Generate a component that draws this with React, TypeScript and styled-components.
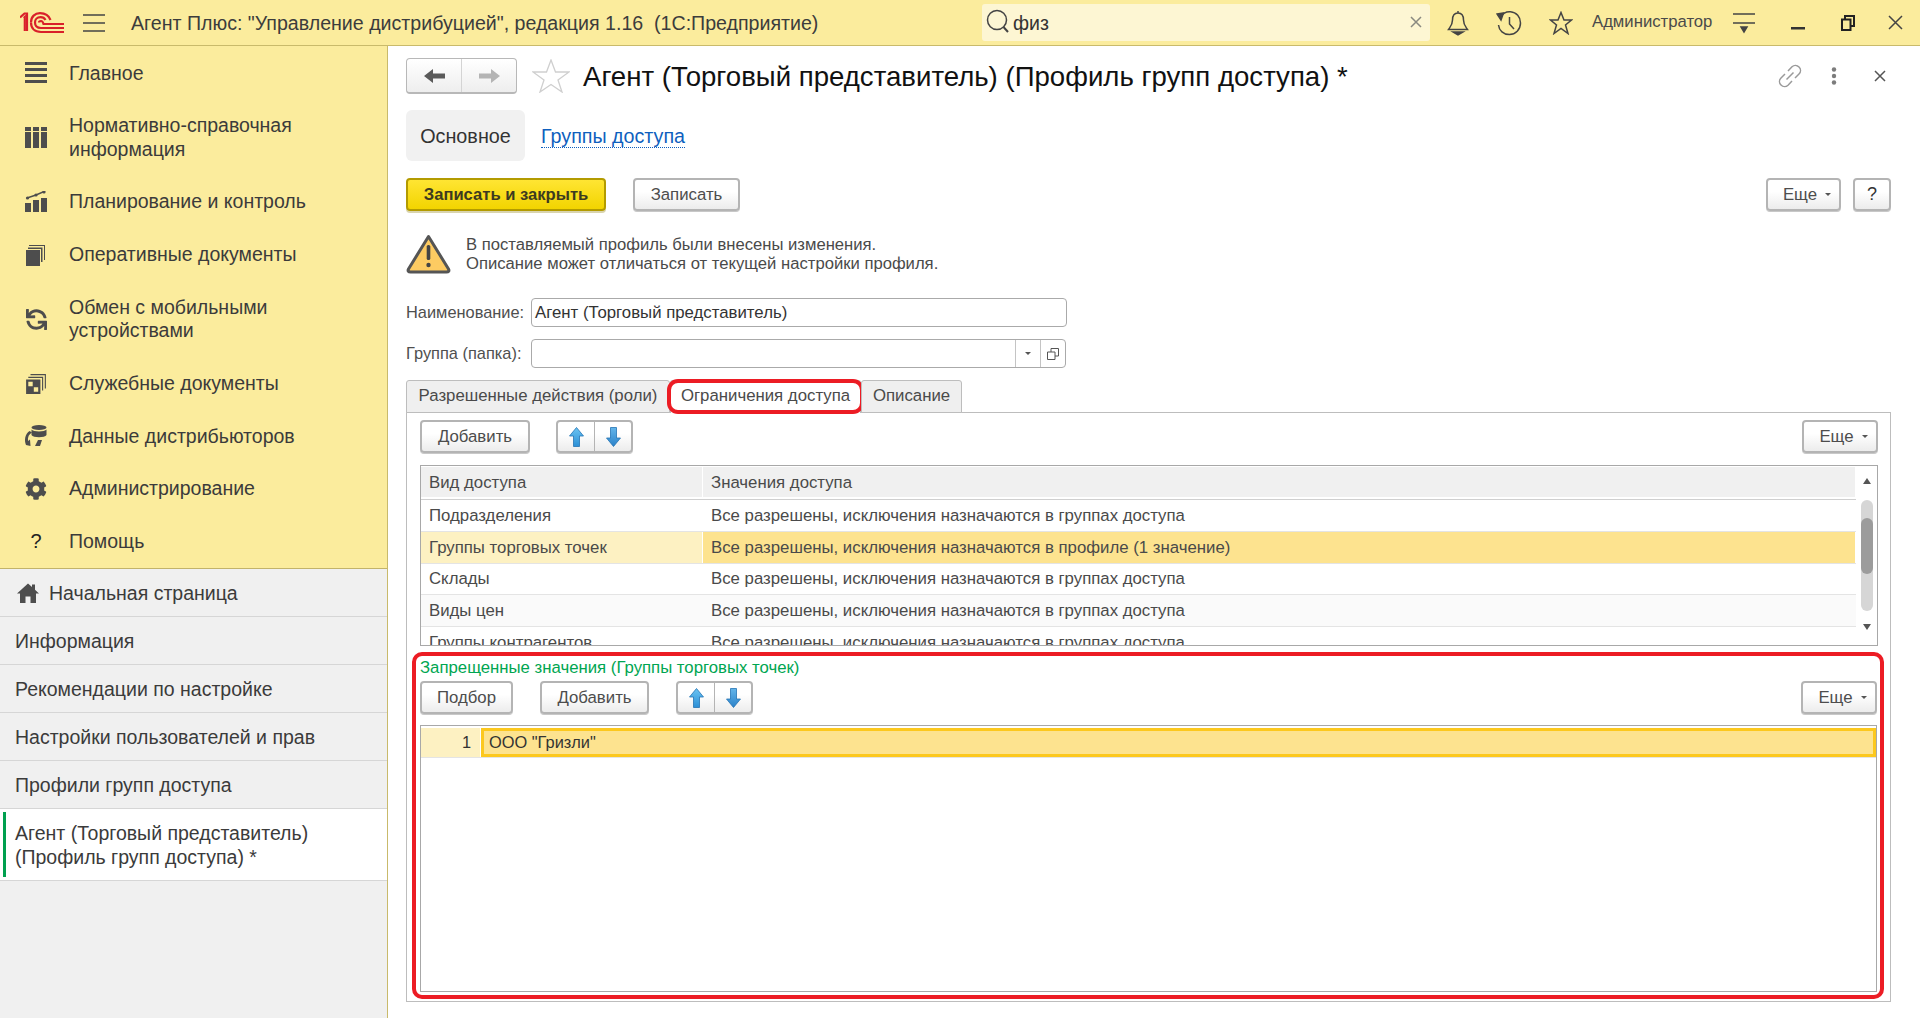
import React from 'react';
import styled, { createGlobalStyle } from 'styled-components';
import { FaCog, FaSync } from 'react-icons/fa';

const GlobalStyle = createGlobalStyle`
  html, body, #root {
    margin: 0;
    padding: 0;
    height: 100%;
  }
  body {
    font-family: "Liberation Sans", Arial, sans-serif;
    color: #333;
    background: #fff;
    overflow: hidden;
  }
  * {
    box-sizing: border-box;
  }
`;

const Page = styled.div`
  width: 1920px;
  height: 1018px;
  display: flex;
  flex-direction: column;
`;

/* top bar */
const TopBar = styled.header`
  height: 46px;
  flex: none;
  display: flex;
  align-items: center;
  background: #fbec9d;
  border-bottom: 1px solid #c9ba6b;
  padding-left: 20px;
`;

const AppTitle = styled.div`
  font-size: 19.6px;
  color: #3c3c3c;
  margin-left: 26px;
  padding-top: 2px;
  width: 851px;
  white-space: nowrap;
`;

const Search = styled.div`
  width: 448px;
  height: 37px;
  margin-top: -1px;
  background: #fdf6d3;
  border-radius: 3px;
  display: flex;
  align-items: center;
  padding: 0 8px 0 4px;
  font-size: 19.5px;
  color: #333;
`;

const SearchText = styled.span`
  flex: 1;
  margin-left: 3px;
  padding-top: 2px;
`;

const TopIcons = styled.div`
  display: flex;
  align-items: center;
  margin-left: 17px;
  gap: 27px;
`;

const UserName = styled.span`
  font-size: 16.7px;
  color: #4a4a4a;
  margin-left: 19px;
  margin-top: -1px;
  width: 141px;
  white-space: nowrap;
`;

const WindowButtons = styled.div`
  display: flex;
  align-items: center;
  gap: 36px;
  margin-left: 36px;
`;

const Body = styled.div`
  flex: 1;
  display: flex;
  min-height: 0;
`;

/* left side */
const Side = styled.aside`
  width: 388px;
  flex: none;
  display: flex;
  flex-direction: column;
  background: #f0f0f0;
  border-right: 1px solid #c9ba6b;
`;

const Sections = styled.nav`
  flex: none;
  height: 523px;
  background: #fbec9d;
  border-bottom: 1px solid #c2b36a;
  padding-top: 1px;
`;

const SectionItem = styled.div`
  display: flex;
  align-items: center;
  padding: 14.6px 20px 14.6px 25px;
  font-size: 19.5px;
  line-height: 23.5px;
  color: #3b3b3b;
`;

const SectionIcon = styled.span`
  width: 22px;
  height: 22px;
  flex: none;
  margin-right: 22px;
  display: flex;
  align-items: center;
  justify-content: center;
  color: #4d4d4d;
  font-size: 20px;
`;

const HelpMark = styled.span`
  color: #222;
  font-size: 20px;
`;

const SyncMark = styled(FaSync)`
  transform: scaleX(-1);
`;

const OpenList = styled.div`
  display: flex;
  flex-direction: column;
`;

const OpenItem = styled.div<{ $active?: boolean }>`
  position: relative;
  display: flex;
  align-items: center;
  padding: 12px 15px 11px;
  min-height: 48px;
  font-size: 19.5px;
  line-height: 24px;
  color: #3b3b3b;
  background: ${(p) => (p.$active ? '#fff' : 'transparent')};
  border-bottom: 1px solid #d6d6d6;

  ${(p) =>
    p.$active &&
    `&::before {
      content: '';
      position: absolute;
      left: 3px;
      top: 3px;
      bottom: 3px;
      width: 3px;
      background: #00a04f;
    }`}
`;

const HomeMark = styled.svg`
  display: block;
  flex: none;
  fill: #4d4d4d;
  margin-right: 10px;
  margin-left: 2px;
`;

/* form */
const Main = styled.main`
  flex: 1;
  min-width: 0;
  display: flex;
  flex-direction: column;
  padding: 12px 29px 16px 18px;
  background: #fff;
`;

const TitleRow = styled.div`
  height: 36px;
  display: flex;
  align-items: center;
`;

const NavButtons = styled.div`
  width: 111px;
  height: 36px;
  display: flex;
  border: 1px solid #b8b8b8;
  border-bottom-width: 2px;
  border-radius: 4px;
  background: linear-gradient(#fff, #eeeeee);
`;

const NavCell = styled.span`
  flex: 1;
  display: flex;
  align-items: center;
  justify-content: center;

  & + & {
    border-left: 1px solid #d4d4d4;
  }
`;

const FormTitle = styled.h1`
  margin: 0 0 0 13px;
  padding-top: 2px;
  font-size: 27.6px;
  font-weight: 400;
  color: #111;
  white-space: nowrap;
  flex: 1;
`;

const FormIcons = styled.div`
  display: flex;
  align-items: center;
  gap: 29px;
  margin-right: 5px;
`;

const PageTabs = styled.div`
  margin-top: 16px;
  height: 51px;
  display: flex;
  align-items: center;
  gap: 16px;
`;

const CurrentPage = styled.div`
  width: 119px;
  height: 51px;
  padding-top: 2px;
  display: flex;
  align-items: center;
  justify-content: center;
  background: #f1f1f1;
  border-radius: 6px;
  font-size: 19.8px;
  color: #333;
`;

const PageLink = styled.a`
  font-size: 19.7px;
  margin-top: 2px;
  color: #0f5fbe;
  text-decoration: none;
  border-bottom: 1px dotted #0f5fbe;
  line-height: 21px;
`;

const CommandBar = styled.div<{ $gap?: number }>`
  display: flex;
  align-items: flex-start;
  gap: ${(p) => p.$gap ?? 27}px;
`;

const TopCommands = styled(CommandBar)`
  margin-top: 17px;
`;

const Spacer = styled.div`
  flex: 1;
`;

const Button = styled.button<{ $w: number }>`
  width: ${(p) => p.$w}px;
  height: 33px;
  padding: 0;
  display: flex;
  align-items: center;
  justify-content: center;
  gap: 8px;
  font-family: inherit;
  font-size: 16.8px;
  color: #4d4d4d;
  border: 2px solid #b4b4b4;
  border-radius: 4px;
  background: linear-gradient(#fff 40%, #ececec);
  box-shadow: 0 1px 0 #c8c8c8;
`;

const DefaultButton = styled(Button)`
  font-weight: 700;
  font-size: 16.6px;
  color: #3d3a20;
  border-color: #b39b00;
  background: linear-gradient(#ffe533, #f2d400);
  box-shadow: 0 2px 0 #d9d4ae;
`;

const MoreBtn = styled(Button)`
  padding-left: 7px;
`;

const HelpBtn = styled(Button)`
  font-size: 18px;
  color: #333;
`;

const Caret = styled.i`
  display: block;
  width: 0;
  height: 0;
  border-left: 3px solid transparent;
  border-right: 3px solid transparent;
  border-top: 3px solid #555;
`;

const MoveButtons = styled.div`
  width: 77px;
  height: 33px;
  display: flex;
  border: 2px solid #b4b4b4;
  border-radius: 4px;
  background: linear-gradient(#fff 40%, #ececec);
  box-shadow: 0 1px 0 #c8c8c8;
`;

const MoveCell = styled.span`
  flex: 1;
  display: flex;
  align-items: center;
  justify-content: center;

  & + & {
    border-left: 1px solid #b4b4b4;
  }
`;

const Notice = styled.div`
  margin-top: 23px;
  height: 40px;
  display: flex;
  align-items: center;
  gap: 15px;
`;

const NoticeText = styled.div`
  font-size: 16.65px;
  line-height: 19px;
  color: #4a4a4a;
  margin-top: -1px;
`;

const FieldRow = styled.div`
  display: flex;
  align-items: center;
  height: 29px;
  margin-top: 12px;
`;

const NameRow = styled(FieldRow)`
  margin-top: 24px;
`;

const FieldLabel = styled.label`
  width: 125px;
  flex: none;
  font-size: 16.4px;
  color: #4f4f4f;
  white-space: nowrap;
`;

const TextBox = styled.div<{ $w: number }>`
  width: ${(p) => p.$w}px;
  height: 29px;
  display: flex;
  align-items: center;
  padding-left: 3px;
  font-size: 16.8px;
  color: #333;
  border: 1px solid #aaa;
  border-radius: 4px;
`;

const PickerButton = styled.span`
  width: 25px;
  align-self: stretch;
  flex: none;
  display: flex;
  align-items: center;
  justify-content: center;
  border-left: 1px solid #c4c4c4;
`;

const TabStrip = styled.div`
  display: flex;
  height: 33px;
  margin-top: 12px;
  flex: none;
`;

const FormTab = styled.div<{ $w: number; $active?: boolean }>`
  position: relative;
  width: ${(p) => p.$w}px;
  height: 33px;
  padding-bottom: 2px;
  display: flex;
  align-items: center;
  justify-content: center;
  font-size: 16.8px;
  color: #4a4a4a;
  white-space: nowrap;
  background: ${(p) => (p.$active ? '#fff' : '#efefef')};
  border: 1px solid #bdbdbd;
  border-bottom: ${(p) => (p.$active ? 'none' : '1px solid #bdbdbd')};
  border-radius: 3px 3px 0 0;
  z-index: 1;

  ${(p) =>
    p.$active &&
    `&::after {
      content: '';
      position: absolute;
      left: -4px;
      right: -4px;
      top: -2px;
      bottom: -1px;
      border: 4px solid #ec1c24;
      border-radius: 11px;
    }`}
`;

const TabBody = styled.section`
  flex: 1;
  min-height: 0;
  margin-top: -1px;
  display: flex;
  flex-direction: column;
  border: 1px solid #bdbdbd;
  padding-top: 7px;
`;

const UpperPart = styled.div`
  padding: 0 12px 0 13px;
`;

const TableFrame = styled.div`
  margin-top: 12px;
  height: 181px;
  display: flex;
  border: 1px solid #a8a8a8;
  overflow: hidden;
`;

const Rows = styled.div`
  flex: 1;
  min-width: 0;
  display: flex;
  flex-direction: column;
`;

const Row = styled.div<{ $odd?: boolean }>`
  height: 31.8px;
  flex: none;
  display: grid;
  grid-template-columns: 282px 1fr;
  font-size: 16.8px;
  color: #4a4a4a;
  border-bottom: 1px solid #e4e4e4;
  background: ${(p) => (p.$odd ? '#fafafa' : '#fff')};
`;

const Cell = styled.div<{ $fill?: string }>`
  display: flex;
  align-items: center;
  padding: 1px 0 0 8px;
  white-space: nowrap;
  margin-right: 1px;
  background: ${(p) => p.$fill ?? 'transparent'};
`;

const HeadRow = styled(Row)`
  height: 34px;
  padding-top: 1px;
  border-bottom: 1px solid #cfcfcf;
`;

const HeadCell = styled(Cell)`
  background: #f0f0f0;
  margin-bottom: 2px;
`;

const Scroller = styled.div`
  width: 21px;
  flex: none;
  display: flex;
  flex-direction: column;
  align-items: center;
  padding-top: 12px;
`;

const ScrollTrack = styled.div`
  width: 12px;
  height: 111px;
  flex: none;
  margin: 16px 0 13px;
  padding-top: 18px;
  border-radius: 6px;
  background: #d6d6d6;
`;

const ScrollThumb = styled.div`
  height: 56px;
  border-radius: 6px;
  background: #9c9c9c;
`;

const ScrollArrow = styled.i<{ $up?: boolean }>`
  display: block;
  flex: none;
  width: 0;
  height: 0;
  border-left: 4px solid transparent;
  border-right: 4px solid transparent;
  ${(p) => (p.$up ? 'border-bottom: 6px solid #555;' : 'border-top: 6px solid #555;')}
`;

const MarkedPart = styled.div`
  flex: 1;
  min-height: 0;
  margin: 6px 6px 2px 5px;
  padding: 2px 3px 3px 4px;
  display: flex;
  flex-direction: column;
  border: 4px solid #ec1c24;
  border-radius: 10px;
`;

const PartTitle = styled.div`
  font-size: 16.75px;
  line-height: 20px;
  color: #00a651;
  margin-bottom: 3px;
`;

const ValueTable = styled.div`
  flex: 1;
  min-height: 0;
  margin-top: 11px;
  border: 1px solid #a8a8a8;
  padding-top: 2px;
`;

const ValueRow = styled.div`
  height: 30px;
  display: flex;
  font-size: 16.4px;
  color: #333;
  border-bottom: 1px solid #e4e4e4;
`;

const RowNumber = styled.div`
  width: 59px;
  flex: none;
  display: flex;
  align-items: center;
  justify-content: flex-end;
  padding-right: 9px;
  background: #fdf1c2;
  margin-right: 1px;
`;

const ValueCell = styled.div`
  flex: 1;
  display: flex;
  align-items: center;
  padding-left: 5px;
  background: #fde38f;
  border: 3px solid #fcc81e;
`;

const Stroke = styled.svg`
  display: block;
  flex: none;
  fill: none;
  stroke: #444;
  stroke-width: 1.5;
`;

const Solid = styled.svg`
  display: block;
  flex: none;
  fill: currentColor;
`;

function Logo() {
  return (
    <svg width="44" height="22" viewBox="0 0 44 22" style={{ flex: 'none' }}>
      <g fill="none" stroke="#d9202a" strokeWidth="2.2">
        <path d="M0 5.5 L4.5 1.5 H7 V19" />
        <path d="M3.8 6 L4.8 5 V19" />
        <path d="M11 10.5 C11 4.5 15 1.2 20 1.2 C25 1.2 29 4 30.5 8" />
        <path d="M25.5 8 C24.5 6 22.5 5.2 20.5 5.2 C17 5.2 15 7.5 15 10.5 C15 14 17.5 16 21 16 H44" />
        <path d="M11 10.5 C11 16.5 15 20 21 20 H44" />
        <path d="M19 10.5 C19 9.5 20 9 21 9 C22.5 9 23 10 23.5 12 H44" />
      </g>
    </svg>
  );
}

function Burger() {
  return (
    <Stroke width="22" height="18" viewBox="0 0 22 18" style={{ marginLeft: 19 }}>
      <path d="M0 1h22M0 9h22M0 17h22" />
    </Stroke>
  );
}

const sectionIcons: Record<string, React.ReactNode> = {
  main: (
    <Solid width="22" height="22" viewBox="0 0 22 22">
      <rect y="0" width="22" height="3" />
      <rect y="6" width="22" height="3" />
      <rect y="12" width="22" height="3" />
      <rect y="18" width="22" height="3" />
    </Solid>
  ),
  refs: (
    <Solid width="22" height="22" viewBox="0 0 22 22">
      <rect x="0" y="0" width="6" height="4" />
      <rect x="8" y="0" width="6" height="4" />
      <rect x="16" y="0" width="6" height="4" />
      <rect x="0" y="5" width="6" height="16" />
      <rect x="8" y="5" width="6" height="16" />
      <rect x="16" y="5" width="6" height="16" />
    </Solid>
  ),
  plan: (
    <Solid width="22" height="22" viewBox="0 0 22 22">
      <rect x="0" y="12" width="6" height="9" />
      <rect x="8" y="9" width="6" height="12" />
      <rect x="16" y="7" width="6" height="14" />
      <path d="M2 7 L11 4 L19 0.5" fill="none" stroke="currentColor" strokeWidth="1.4" />
      <circle cx="2.5" cy="7" r="1.6" />
      <circle cx="11" cy="4" r="1.6" />
      <circle cx="19" cy="1" r="1.6" />
    </Solid>
  ),
  docs: (
    <Solid width="20" height="22" viewBox="0 0 20 22">
      <path d="M3 2 V1 H19 V16 H18 V2 Z" />
      <path d="M2 5 V3.5 H16.5 V18 H15 V5 Z" />
      <rect x="0" y="6" width="14" height="16" />
    </Solid>
  ),
  service: (
    <Solid width="20" height="22" viewBox="1 1 18 20">
      <path d="M5 3 V2 H19 V15 H18 V3 Z" />
      <path d="M3 5.5 V4.5 H16.5 V17 H15.5 V5.5 Z" />
      <path d="M1 7 H14 V20 H1 Z M3 9 V13 H7 V9 Z M8 14 V18 H12 V14 Z" fillRule="evenodd" />
    </Solid>
  ),
  data: (
    <Solid width="24" height="24" viewBox="0 0 24 24">
      <ellipse cx="15" cy="3.5" rx="7.5" ry="2.5" />
      <path d="M7.5 5.5 C9 8 21 8 22.5 5.5 V11 C21 14 9 14 7.5 11 Z" />
      <path d="M5.5 7 L8 8.5 C5 10 3.5 13 4 17 L6 15.5 L6.5 22 L2 21 C0 16 1 10 5.5 7 Z" />
      <path d="M11 22 L14 16 H18 L16 22 Z" />
    </Solid>
  ),
};

const sections = [
  { icon: sectionIcons.main, text: <>Главное</> },
  { icon: sectionIcons.refs, text: <>Нормативно-справочная<br />информация</> },
  { icon: sectionIcons.plan, text: <>Планирование и контроль</> },
  { icon: sectionIcons.docs, text: <>Оперативные документы</> },
  { icon: <SyncMark size={21} />, text: <>Обмен с мобильными<br />устройствами</> },
  { icon: sectionIcons.service, text: <>Служебные документы</> },
  { icon: sectionIcons.data, text: <>Данные дистрибьюторов</> },
  { icon: <FaCog size={22} />, text: <>Администрирование</> },
  { icon: <HelpMark>?</HelpMark>, text: <>Помощь</> },
];

function NavArrow({ dir, color }: { dir: 'left' | 'right'; color: string }) {
  return (
    <svg width="21" height="16" viewBox="0 0 21 16" style={{ transform: dir === 'right' ? 'scaleX(-1)' : undefined }}>
      <path d="M0 8 L9 1 V5.5 H21 V10.5 H9 V15 Z" fill={color} />
    </svg>
  );
}

function MoveArrow({ down }: { down?: boolean }) {
  const id = down ? 'arrow-down' : 'arrow-up';
  return (
    <svg width="15" height="20" viewBox="0 0 15 20" style={{ transform: down ? 'scaleY(-1)' : undefined }}>
      <defs>
        <linearGradient id={id} x1="0" y1="0" x2="0" y2="1">
          <stop offset="0" stopColor={down ? '#2b82c9' : '#6cc4f2'} />
          <stop offset="1" stopColor={down ? '#63b5ea' : '#2b8fd6'} />
        </linearGradient>
      </defs>
      <path d="M7.5 0.5 L14.5 9 H10.5 V19.5 H4.5 V9 H0.5 Z" fill={`url(#${id})`} stroke="#2474b4" strokeWidth="0.8" />
    </svg>
  );
}

function MoveGroup() {
  return (
    <MoveButtons>
      <MoveCell><MoveArrow /></MoveCell>
      <MoveCell><MoveArrow down /></MoveCell>
    </MoveButtons>
  );
}

function MoreButton({ width }: { width: number }) {
  return (
    <MoreBtn $w={width}>
      Еще
      <Caret />
    </MoreBtn>
  );
}

const accessRows = [
  { kind: 'Подразделения', value: 'Все разрешены, исключения назначаются в группах доступа' },
  { kind: 'Группы торговых точек', value: 'Все разрешены, исключения назначаются в профиле (1 значение)', current: true },
  { kind: 'Склады', value: 'Все разрешены, исключения назначаются в группах доступа' },
  { kind: 'Виды цен', value: 'Все разрешены, исключения назначаются в группах доступа', odd: true },
  { kind: 'Группы контрагентов', value: 'Все разрешены, исключения назначаются в группах доступа' },
];

export default function App() {
  return (
    <Page>
      <GlobalStyle />
      <TopBar>
        <Logo />
        <Burger />
        <AppTitle>Агент Плюс: "Управление дистрибуцией", редакция 1.16&nbsp; (1С:Предприятие)</AppTitle>
        <Search>
          <Stroke width="24" height="26" viewBox="0 0 24 26">
            <circle cx="11" cy="11" r="9.5" />
            <path d="M17.5 18 L22 23" strokeWidth="2" />
          </Stroke>
          <SearchText>физ</SearchText>
          <Stroke width="12" height="12" viewBox="0 0 12 12" style={{ stroke: '#8a8a80' }}>
            <path d="M1 1 L11 11 M11 1 L1 11" />
          </Stroke>
        </Search>
        <TopIcons>
          <Stroke width="22" height="26" viewBox="0 0 22 26">
            <path d="M11 1 V3 M11 3 C6.5 3 5.5 7 5.5 10 C5.5 15 3 17 1.5 19.5 H20.5 C19 17 16.5 15 16.5 10 C16.5 7 15.5 3 11 3 Z" />
            <path d="M6 22 H16 L11 25 Z" fill="#444" />
          </Stroke>
          <Stroke width="26" height="26" viewBox="0 0 26 26">
            <path d="M4.5 7 C7 3 11 1.5 14.5 1.8 C20.5 2.3 24.5 7 24.5 13 C24.5 19.5 19.5 24.5 13.5 24.5 C7.5 24.5 3 20.5 2.5 15" />
            <path d="M1 4 L7.5 3 L5 10 Z" fill="#444" />
            <path d="M13.5 7 V14 L18 19" />
          </Stroke>
          <Stroke width="24" height="24" viewBox="0 0 24 24">
            <path d="M12 1.5 L15 9 H22.5 L16.5 14 L19 22.5 L12 17.5 L5 22.5 L7.5 14 L1.5 9 H9 Z" />
          </Stroke>
        </TopIcons>
        <UserName>Администратор</UserName>
        <Stroke width="22" height="22" viewBox="0 0 22 22">
          <path d="M0 2 H22 M0 11 H22" />
          <path d="M8 15 H14 L11 20 Z" fill="#444" />
        </Stroke>
        <WindowButtons>
          <Solid width="14" height="14" viewBox="0 0 14 14" style={{ color: '#333' }}>
            <rect y="11" width="14" height="2.5" />
          </Solid>
          <Stroke width="14" height="16" viewBox="0 0 14 16" style={{ stroke: '#222', strokeWidth: 2 }}>
            <path d="M4 3.5 V1 H13 V11 H9.5 M1 4.5 H9.5 V15 H1 Z" />
          </Stroke>
          <Stroke width="15" height="15" viewBox="0 0 15 15" style={{ marginLeft: -3 }}>
            <path d="M1 1 L14 14 M14 1 L1 14" />
          </Stroke>
        </WindowButtons>
      </TopBar>

      <Body>
        <Side>
          <Sections>
            {sections.map((item, i) => (
              <SectionItem key={i}>
                <SectionIcon>{item.icon}</SectionIcon>
                <span>{item.text}</span>
              </SectionItem>
            ))}
          </Sections>
          <OpenList>
            <OpenItem>
              <HomeMark width="22" height="20" viewBox="0 0 22 20">
                <path d="M11 0.5 L15 4 V1.5 H18 V6.8 L22 10.5 H19 V20 H13.5 V13.5 H8.5 V20 H3 V10.5 H0 Z" />
              </HomeMark>
              Начальная страница
            </OpenItem>
            <OpenItem>Информация</OpenItem>
            <OpenItem>Рекомендации по настройке</OpenItem>
            <OpenItem>Настройки пользователей и прав</OpenItem>
            <OpenItem>Профили групп доступа</OpenItem>
            <OpenItem $active>
              <span>Агент (Торговый представитель)<br />(Профиль групп доступа) *</span>
            </OpenItem>
          </OpenList>
        </Side>

        <Main>
          <TitleRow>
            <NavButtons>
              <NavCell><NavArrow dir="left" color="#5a5a5a" /></NavCell>
              <NavCell><NavArrow dir="right" color="#b4b4b4" /></NavCell>
            </NavButtons>
            <svg width="38" height="34" viewBox="0 0 38 34" style={{ marginLeft: 15, flex: 'none' }}>
              <path d="M19 1 L23.5 13 H37 L26 21 L30 33 L19 25.5 L8 33 L12 21 L1 13 H14.5 Z" fill="none" stroke="#cfcfcf" strokeWidth="1.3" />
            </svg>
            <FormTitle>Агент (Торговый представитель) (Профиль групп доступа) *</FormTitle>
            <FormIcons>
              <Stroke width="24" height="24" viewBox="0 0 24 24" style={{ stroke: '#9a9a9a' }}>
                <path d="M10 7 L14 2.8 C16 1 19 1 21 3 C23 5 23 8 21 10 L17 14 M14 17 L10 21.2 C8 23 5 23 3 21 C1 19 1 16 3 14 L7 10 M8.5 15.5 L15.5 8.5" />
              </Stroke>
              <Solid width="6" height="18" viewBox="0 0 6 18" style={{ color: '#7c7c7c' }}>
                <circle cx="3" cy="2.5" r="2.2" />
                <circle cx="3" cy="9" r="2.2" />
                <circle cx="3" cy="15.5" r="2.2" />
              </Solid>
              <Stroke width="12" height="12" viewBox="0 0 12 12" style={{ marginLeft: 8, stroke: '#555' }}>
                <path d="M1 1 L11 11 M11 1 L1 11" />
              </Stroke>
            </FormIcons>
          </TitleRow>

          <PageTabs>
            <CurrentPage>Основное</CurrentPage>
            <PageLink>Группы доступа</PageLink>
          </PageTabs>

          <TopCommands>
            <DefaultButton $w={200}>Записать и закрыть</DefaultButton>
            <Button $w={107}>Записать</Button>
            <Spacer />
            <CommandBar $gap={12}>
              <MoreButton width={75} />
              <HelpBtn $w={38}>?</HelpBtn>
            </CommandBar>
          </TopCommands>

          <Notice>
            <svg width="45" height="40" viewBox="0 0 45 40" style={{ flex: 'none' }}>
              <path d="M22.5 2.5 L42.5 35 C43.5 37 42.5 38 40.5 38 H4.5 C2.5 38 1.5 37 2.5 35 Z" fill="#fdcb62" stroke="#555" strokeWidth="3" strokeLinejoin="round" />
              <rect x="20.7" y="11" width="3.6" height="15" rx="1.6" fill="#444" />
              <circle cx="22.5" cy="31" r="2.2" fill="#444" />
            </svg>
            <NoticeText>
              В поставляемый профиль были внесены изменения.<br />
              Описание может отличаться от текущей настройки профиля.
            </NoticeText>
          </Notice>

          <NameRow>
            <FieldLabel>Наименование:</FieldLabel>
            <TextBox $w={536}>Агент (Торговый представитель)</TextBox>
          </NameRow>
          <FieldRow>
            <FieldLabel>Группа (папка):</FieldLabel>
            <TextBox $w={535}>
              <Spacer />
              <PickerButton><Caret /></PickerButton>
              <PickerButton>
                <Stroke width="12" height="12" viewBox="0 0 12 12" style={{ strokeWidth: 1, stroke: '#555' }}>
                  <path d="M4 4 V0.5 H11.5 V8 H8 M0.5 4 H8 V11.5 H0.5 Z" />
                </Stroke>
              </PickerButton>
            </TextBox>
          </FieldRow>

          <TabStrip>
            <FormTab $w={264}>Разрешенные действия (роли)</FormTab>
            <FormTab $w={191} $active>Ограничения доступа</FormTab>
            <FormTab $w={101}>Описание</FormTab>
          </TabStrip>

          <TabBody>
            <UpperPart>
              <CommandBar $gap={26}>
                <Button $w={110}>Добавить</Button>
                <MoveGroup />
                <Spacer />
                <MoreButton width={76} />
              </CommandBar>
              <TableFrame>
                <Rows>
                  <HeadRow>
                    <HeadCell>Вид доступа</HeadCell>
                    <HeadCell>Значения доступа</HeadCell>
                  </HeadRow>
                  {accessRows.map((row) => (
                    <Row key={row.kind} $odd={row.odd}>
                      <Cell $fill={row.current ? '#fdf1c2' : undefined}>{row.kind}</Cell>
                      <Cell $fill={row.current ? '#fde38f' : undefined}>{row.value}</Cell>
                    </Row>
                  ))}
                </Rows>
                <Scroller>
                  <ScrollArrow $up />
                  <ScrollTrack>
                    <ScrollThumb />
                  </ScrollTrack>
                  <ScrollArrow />
                </Scroller>
              </TableFrame>
            </UpperPart>

            <MarkedPart>
              <PartTitle>Запрещенные значения (Группы торговых точек)</PartTitle>
              <CommandBar $gap={27}>
                <Button $w={93}>Подбор</Button>
                <Button $w={109}>Добавить</Button>
                <MoveGroup />
                <Spacer />
                <MoreButton width={76} />
              </CommandBar>
              <ValueTable>
                <ValueRow>
                  <RowNumber>1</RowNumber>
                  <ValueCell>ООО "Гризли"</ValueCell>
                </ValueRow>
              </ValueTable>
            </MarkedPart>
          </TabBody>
        </Main>
      </Body>
    </Page>
  );
}
